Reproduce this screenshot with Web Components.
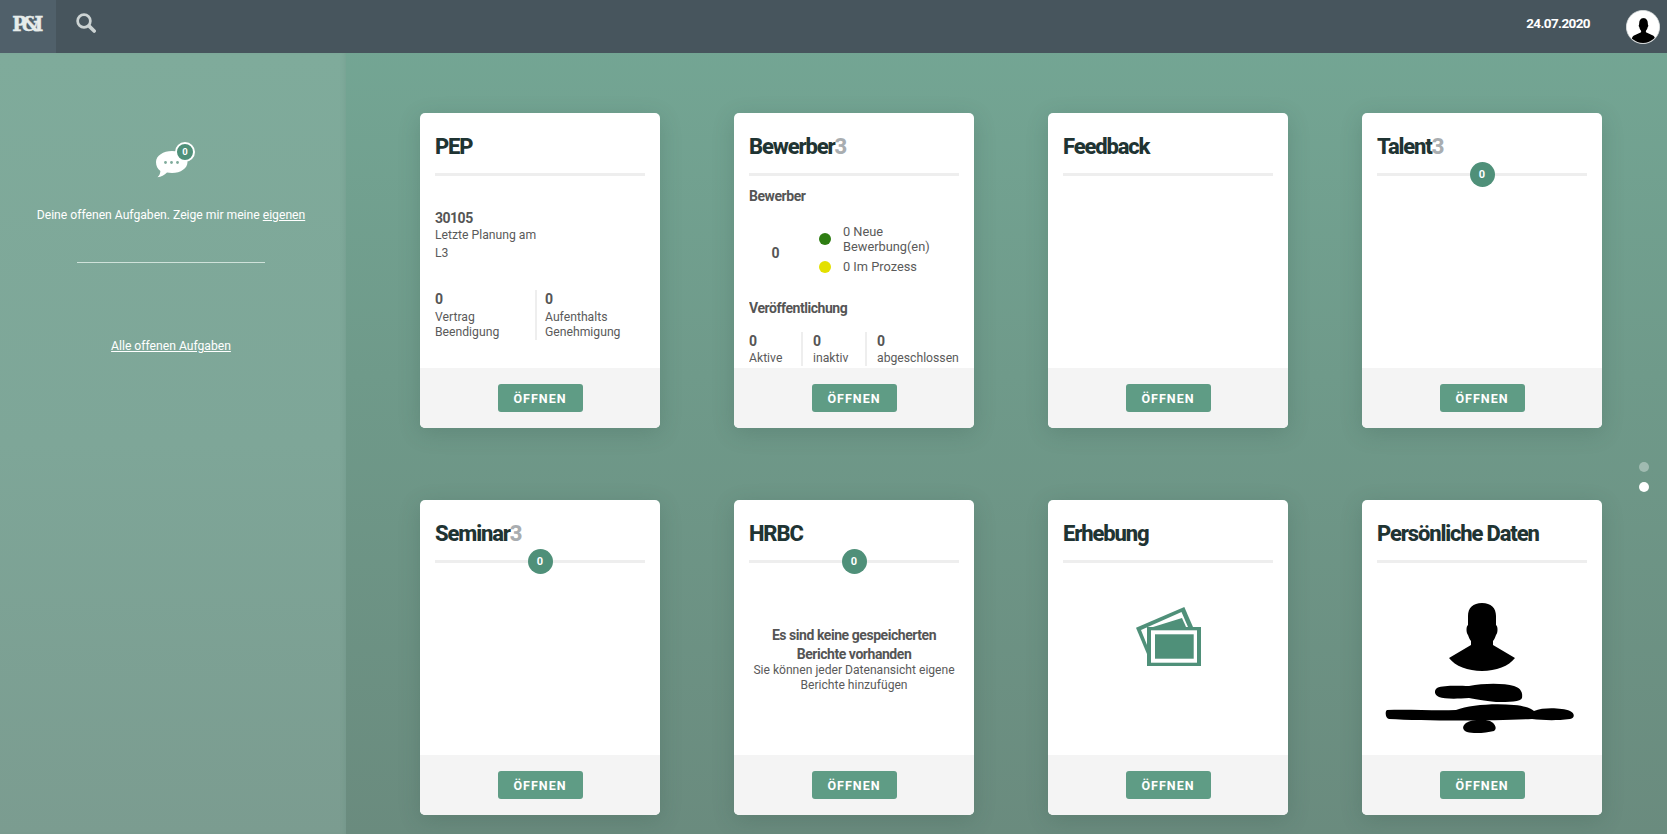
<!DOCTYPE html>
<html lang="de">
<head>
<meta charset="utf-8">
<title>P&amp;I</title>
<style>
  html, body { margin: 0; height: 100%; overflow: hidden; }
  body { font-family: Roboto, "Liberation Sans", sans-serif; color: #4d4d4d; }
  .pep { padding-top: 32px; }
</style>
</head>
<body>

<app-shell>
  <top-bar slot="top" date="24.07.2020"></top-bar>
  <side-panel slot="side"></side-panel>

  <tile-card heading="PEP">
    <div class="pep">
      <stat-block value="30105" style="--stat-line:17.5px"><div>Letzte Planung am</div><div>L3</div></stat-block>
      <stat-row style="--row-top:28px;--col-pad:8px">
        <stat-block value="0" style="--val-gap:1.5px">Vertrag<br>Beendigung</stat-block>
        <stat-block value="0" style="--val-gap:1.5px">Aufenthalts<br>Genehmigung</stat-block>
      </stat-row>
    </div>
  </tile-card>

  <tile-card heading="Bewerber" count="3">
    <applicant-summary></applicant-summary>
  </tile-card>

  <tile-card heading="Feedback"></tile-card>
  <tile-card heading="Talent" count="3" badge="0"></tile-card>
  <tile-card heading="Seminar" count="3" badge="0"></tile-card>

  <tile-card heading="HRBC" badge="0">
    <empty-note title-text="Es sind keine gespeicherten Berichte vorhanden">Sie können jeder Datenansicht eigene Berichte hinzufügen</empty-note>
  </tile-card>

  <tile-card heading="Erhebung">
    <photo-stack></photo-stack>
  </tile-card>

  <tile-card heading="Persönliche Daten">
    <person-redacted></person-redacted>
  </tile-card>

  <page-dots slot="overlay"></page-dots>
</app-shell>

<script>
// small helper, every component has the same boilerplate
function shadow(el, html) {
  const root = el.attachShadow({ mode: 'open' });
  root.innerHTML = html;
  return root;
}

class AppShell extends HTMLElement {
  constructor() {
    super();
    shadow(this, `
      <style>
        :host {
          display: grid;
          grid-template-columns: 346px 1fr;
          grid-template-rows: 53px 1fr;
          height: 834px;
          position: relative;
          overflow: hidden;
          background: linear-gradient(180deg, #74a795 0%, #6f9a8a 45%, #6a8b7e 100%);
        }
        .top { grid-column: 1 / -1; }
        .tiles {
          display: grid;
          grid-template-columns: repeat(4, 240px);
          grid-auto-rows: 315px;
          column-gap: 74px;
          row-gap: 72px;
          padding: 60px 0 0 74px;
        }
      </style>
      <div class="top"><slot name="top"></slot></div>
      <slot name="side"></slot>
      <main class="tiles"><slot></slot></main>
      <slot name="overlay"></slot>
    `);
  }
}

class TopBar extends HTMLElement {
  constructor() {
    super();
    shadow(this, `
      <style>
        :host { display: flex; align-items: center; height: 53px; background: #47555d; color: #fff; }
        .logo {
          width: 56px; height: 53px; display: flex; align-items: center; justify-content: center;
          background: #50606a; color: #e6ecea;
          font: 700 21px/1 "DejaVu Serif", "Liberation Serif", serif;
          font-stretch: condensed; -webkit-text-stroke: .4px #e6ecea;
          letter-spacing: -4.5px; box-sizing: border-box; padding: 0 5px 6px 0;
        }
        .search { margin: 0 0 7px 20px; width: 20px; height: 20px; display: block; }
        .date { margin-left: auto; font: 700 13.500px/1 Roboto, sans-serif; letter-spacing: -.6px; margin-right: 36px; padding-bottom: 6px; }
        .avatar { width: 34px; height: 34px; margin-right: 7px; display: block; }
      </style>
      <div class="logo">P&amp;I</div>
      <svg class="search" viewBox="0 0 22 22" fill="none" stroke="#ccd3d3">
        <circle cx="8.800" cy="8.800" r="7" stroke-width="3"/>
        <path d="M14.200 14.200 L20 19.800" stroke-width="4" stroke-linecap="round"/>
      </svg>
      <div class="date">${this.getAttribute('date')}</div>
      <svg class="avatar" viewBox="0 0 34 34">
        <defs><clipPath id="c"><circle cx="17" cy="17" r="16"/></clipPath></defs>
        <circle cx="17" cy="17" r="16.600" fill="#fff" stroke="#dfe3e3" stroke-width=".8"/>
        <path clip-path="url(#c)" d="M17 8c3.200 0 4.800 2 4.800 5 0 1 .1 1.700.4 2.200.3.700-.1 1.500-.5 1.800-.3 1.700-1 3-1.800 3.800v1.500l6.500 3c2 .9 3 2 3.600 8.700H5c.6-6.700 1.600-7.800 3.600-8.700l6.500-3v-1.500c-.8-.8-1.500-2.100-1.800-3.800-.4-.3-.8-1.100-.5-1.800.3-.5.400-1.200.4-2.200 0-3 1.600-5 4.800-5z" fill="#000"/>
      </svg>
    `);
  }
}

class SidePanel extends HTMLElement {
  constructor() {
    super();
    shadow(this, `
      <style>
        :host {
          display: block; box-sizing: border-box; height: 781px;
          padding: 89px 4px 0 0;
          background: linear-gradient(180deg, #7fab9b 0%, #7ea698 50%, #7b9c90 100%);
          color: #fff; font: 400 12.150px/18px Roboto, sans-serif; text-align: center;
          box-shadow: inset -4px 0 4px -3px rgba(90,130,115,.25);
        }
        .icon { display: block; width: 40px; height: 40px; margin: 0 auto; }
        p { margin: 24px 0 0; }
        a { color: inherit; text-decoration: underline; }
        hr { width: 188px; height: 1px; margin: 38px auto 0; border: 0; background: #cfe2da; }
        .all { margin-top: 74px; }
      </style>
      <chat-badge class="icon" count="0"></chat-badge>
      <p>Deine offenen Aufgaben. Zeige mir meine <a href="#">eigenen</a></p>
      <hr>
      <p class="all"><a href="#">Alle offenen Aufgaben</a></p>
    `);
  }
}

class ChatBadge extends HTMLElement {
  constructor() {
    super();
    shadow(this, `
      <style>
        :host { position: relative; display: block; }
        svg { position: absolute; left: 4px; top: 8px; width: 33px; height: 28px; }
        b {
          position: absolute; left: 24px; top: 0; width: 16px; height: 16px;
          border: 2px solid #fff; border-radius: 50%; background: #4f9079;
          color: #fff; font: 700 9.500px/16px Roboto, sans-serif; text-align: center;
        }
      </style>
      <svg viewBox="0 0 33 28">
        <path d="M17 1c8.800 0 15.500 4.700 15.500 11S25.800 23 17 23c-1.800 0-3.500-.2-5-.5C9.500 25 6 27 2.500 27.300c1.700-1.500 2.700-3.300 2.900-6.300C2.600 18.900 1 15.800 1 12 1 5.700 8.200 1 17 1z" fill="#fff"/>
        <circle cx="10.500" cy="12.500" r="1.400" fill="#7fab9b"/>
        <circle cx="16.500" cy="12.500" r="1.400" fill="#7fab9b"/>
        <circle cx="22.500" cy="12.500" r="1.400" fill="#7fab9b"/>
      </svg>
      <b>${this.getAttribute('count')}</b>
    `);
  }
}

class TileCard extends HTMLElement {
  constructor() {
    super();
    const count = this.getAttribute('count');
    const badge = this.getAttribute('badge');
    shadow(this, `
      <style>
        :host {
          display: grid; grid-template-rows: 64px 191px 60px;
          background: #fff; border-radius: 5px; overflow: hidden;
          box-shadow: 0 5px 22px rgba(40,70,60,.2);
          position: relative; color: #4d4d4d;
        }
        header { margin: 0 15px; border-bottom: 3px solid #eeeeee; position: relative; height: 60px; }
        h2 {
          margin: 0; padding-top: 20px;
          font: 800 22px/28px Roboto, sans-serif; letter-spacing: -1.150px; color: #1f3433;
        }
        h2 span { color: #a9adb0; }
        .badge {
          position: absolute; left: 50%; top: 49px; margin-left: -12.500px;
          width: 25px; height: 25px; border-radius: 50%; background: #4f9079;
          color: #fff; font: 700 11px/25px Roboto, sans-serif; text-align: center;
        }
        .body { overflow: hidden; padding: 0 15px; font-size: 13px; line-height: 15px; }
        footer {
          background: #f4f4f4; display: flex; align-items: center; justify-content: center;
        }
        button {
          width: 85px; height: 28px; border: 0; border-radius: 3px; background: #5f9c85; color: #fff;
          font: 700 12.500px/1 Roboto, sans-serif; letter-spacing: 1px; padding: 2px 0 0;
        }
      </style>
      <header>
        <h2>${this.getAttribute('heading')}${count ? `<span>${count}</span>` : ''}</h2>
        ${badge ? `<div class="badge">${badge}</div>` : ''}
      </header>
      <div class="body"><slot></slot></div>
      <footer><button>ÖFFNEN</button></footer>
    `);
  }
}

class StatBlock extends HTMLElement {
  constructor() {
    super();
    shadow(this, `
      <style>
        :host { display: block; font: 400 12.200px/var(--stat-line, 15px) Roboto, sans-serif; color: #5a5a5a; }
        b { display: block; font: 700 14px/18px Roboto, sans-serif; color: #555; letter-spacing: -.5px; margin-bottom: var(--val-gap, 0); }
      </style>
      <b>${this.getAttribute('value')}</b>
      <slot></slot>
    `);
  }
}

class StatRow extends HTMLElement {
  constructor() {
    super();
    shadow(this, `
      <style>
        :host { display: flex; margin-top: var(--row-top, 0); }
        ::slotted(stat-block) { flex: 1 1 0; padding-left: var(--col-pad, 10px); border-left: 2px solid #eeeeee; }
        ::slotted(stat-block:first-child) { padding-left: 0; border-left: 0; }
      </style>
      <slot></slot>
    `);
  }
}

class ApplicantSummary extends HTMLElement {
  constructor() {
    super();
    shadow(this, `
      <style>
        :host { display: block; height: 181px; overflow: hidden; padding-top: 10px; color: #5a5a5a; font: 400 12.200px/15px Roboto, sans-serif; }
        h3 { margin: 0; font: 700 14px/18px Roboto, sans-serif; letter-spacing: -.45px; color: #555; }
        .status { display: grid; grid-template-columns: 51px 1fr; margin: 18px 0 0; align-items: center; }
        .total { font: 700 14px/18px Roboto, sans-serif; text-align: center; padding: 8px 0 0 2px; color: #555; }
        ul { margin: 0; padding: 1px 0 0 19px; list-style: none; font-size: 12.800px; }
        li { display: grid; grid-template-columns: 12px 1fr; column-gap: 12px; align-items: center; }
        li + li { margin-top: 5px; }
        i { width: 12px; height: 12px; border-radius: 50%; }
        h3.second { margin-top: 25px; }
        stat-row { margin-top: 15px; }
        stat-block { --val-gap: 1px; }
        .pub stat-block { flex: none; }
        .pub stat-block:nth-child(1) { width: 52px; }
        .pub stat-block:nth-child(2) { width: 52px; }
      </style>
      <h3>Bewerber</h3>
      <div class="status">
        <div class="total">0</div>
        <ul>
          <li><i style="background:#2e7d12"></i><span>0 Neue<br>Bewerbung(en)</span></li>
          <li><i style="background:#e3e000"></i><span>0 Im Prozess</span></li>
        </ul>
      </div>
      <h3 class="second">Veröffentlichung</h3>
      <stat-row class="pub">
        <stat-block value="0">Aktive</stat-block>
        <stat-block value="0">inaktiv</stat-block>
        <stat-block value="0">abgeschlossen</stat-block>
      </stat-row>
    `);
  }
}

class EmptyNote extends HTMLElement {
  constructor() {
    super();
    shadow(this, `
      <style>
        :host { display: block; padding-top: 62px; text-align: center; font: 400 12.100px/15px Roboto, sans-serif; color: #5a5a5a; }
        strong { display: block; font: 700 14px/18.500px Roboto, sans-serif; letter-spacing: -.45px; color: #555; padding: 0 15px; }
      </style>
      <strong>${this.getAttribute('title-text')}</strong>
      <slot></slot>
    `);
  }
}

class PhotoStack extends HTMLElement {
  constructor() {
    super();
    shadow(this, `
      <style>
        :host { display: flex; justify-content: center; padding-top: 43px; }
        svg { width: 65px; height: 59px; display: block; }
      </style>
      <svg viewBox="0 0 65 59">
        <polygon points="0,20.700 48.300,0 57,20 11,47" fill="#4f9079"/>
        <polygon points="5,23 45.500,5 52,20 11,20 11,38" fill="#fff"/>
        <polygon points="17,20 46,11 50,20" fill="#4f9079"/>
        <rect x="11" y="20" width="54" height="39" fill="#4f9079"/>
        <rect x="15" y="23.300" width="46" height="32.400" fill="#fff"/>
        <rect x="19" y="27.300" width="38.700" height="24.400" fill="#4f9079"/>
      </svg>
    `);
  }
}

class PersonRedacted extends HTMLElement {
  constructor() {
    super();
    shadow(this, `
      <style>
        :host { display: block; padding: 39px 0 0 7px; }
        svg { width: 191px; height: 131px; display: block; }
      </style>
      <svg viewBox="0 0 191 131">
        <path d="M98 0C107 0 112 5 112 13V22C114 23 114 30 112 32C111 35 110 37 109 38V42L131 55C125 63 112 68 98 68C84 68 71 63 65 55L87 42V38C86 37 85 35 84 32C82 30 82 23 84 22V13C84 5 89 0 98 0z" fill="#000"/>
        <path d="M53 85C60 82 75 83 85 83C100 80 120 80 130 83C137 85 139 90 138 95C137 99 125 99 112 99C100 98 92 96 85 95C72 96 60 96 55 94C50 92 50 87 53 85z" fill="#000"/>
        <path d="M3 107C25 106 50 108 72 107C85 102 110 100 130 102C142 103 148 106 150 108C160 104 178 105 186 108C191 110 191 115 186 116C170 118 158 117 148 116C110 118 40 118 5 116C1 115 1 108 3 107z" fill="#000"/>
        <path d="M82 120C88 116 100 116 106 118C112 121 113 126 110 128C102 130 90 131 83 129C78 127 78 123 82 120z" fill="#000"/>
      </svg>
    `);
  }
}

class PageDots extends HTMLElement {
  constructor() {
    super();
    shadow(this, `
      <style>
        :host { position: absolute; left: 1639px; top: 462px; display: grid; row-gap: 10px; }
        i { display: block; width: 10px; height: 10px; border-radius: 50%; background: rgba(255,255,255,.35); }
        i.on { background: #fff; }
      </style>
      <i></i><i class="on"></i>
    `);
  }
}

customElements.define('app-shell', AppShell);
customElements.define('top-bar', TopBar);
customElements.define('side-panel', SidePanel);
customElements.define('chat-badge', ChatBadge);
customElements.define('tile-card', TileCard);
customElements.define('stat-block', StatBlock);
customElements.define('stat-row', StatRow);
customElements.define('applicant-summary', ApplicantSummary);
customElements.define('empty-note', EmptyNote);
customElements.define('photo-stack', PhotoStack);
customElements.define('person-redacted', PersonRedacted);
customElements.define('page-dots', PageDots);
</script>
</body>
</html>
